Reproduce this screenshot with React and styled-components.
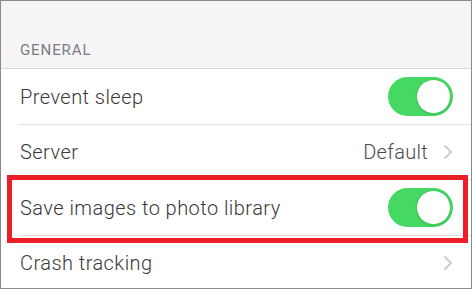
import React from 'react';
import styled, { createGlobalStyle } from 'styled-components';

const GlobalStyle = createGlobalStyle`
  html, body {
    margin:0;
    background:#ffffff;
  }
  * { box-sizing:border-box; }
`;

const Frame = styled.div`
  width:472px;
  height:289px;
  border:1px solid #8a8a8a;
  overflow:hidden;
  background:#ffffff;
  font-family:Roboto, "Liberation Sans", sans-serif;
`;

const SectionHeader = styled.div`
  height:68px;
  background:#f6f4f7;
  border-bottom:1px solid #d9d8dc;
  display:flex;
  align-items:flex-end;
  padding:0 0 9px 19px;
  font-size:15px;
  font-weight:400;
  letter-spacing:0.9px;
  color:#7c7c80;
`;

const Row = styled.div`
  position:relative;
  height:55.5px;
  display:flex;
  align-items:center;
  justify-content:space-between;
  padding:0 18px 0 19px;

  &::before {
    content:'';
    display:${p => (p.last ? 'none' : 'block')};
    position:absolute;
    left:18px;
    right:0;
    bottom:0;
    height:1px;
    background:#e0e0e2;
  }

  &::after {
    content:'';
    display:${p => (p.highlight ? 'block' : 'none')};
    position:absolute;
    z-index:2;
    top:-5px;
    bottom:-7px;
    left:6px;
    right:3px;
    border:5px solid #ea1f28;
    pointer-events:none;
  }
`;

const Label = styled.span`
  font-size:20px;
  font-weight:300;
  letter-spacing:0.45px;
  color:#383838;
`;

const Right = styled.div`
  display:flex;
  align-items:center;
  gap:15px;
`;

const Value = styled.span`
  font-size:20px;
  font-weight:300;
  letter-spacing:0.3px;
  color:#4a4a4a;
`;

const Track = styled.div`
  width:65px;
  height:39px;
  border-radius:20px;
  background:${p => (p.on ? '#45d964' : '#e5e5ea')};
  display:flex;
  align-items:center;
  justify-content:${p => (p.on ? 'flex-end' : 'flex-start')};
  padding:0 2px;
`;

const Knob = styled.div`
  width:35px;
  height:35px;
  border-radius:50%;
  background:#ffffff;
  border:1px solid #3cc95a;
  box-shadow:0 1px 2px rgba(0,0,0,0.12);
`;

function Toggle({ on }) {
  return (
    <Track on={on ? 1 : 0}>
      <Knob />
    </Track>
  );
}

function Chevron() {
  return (
    <svg width="10" height="16" viewBox="0 0 10 16">
      <polyline points="1.5,1.5 8,8 1.5,14.5" fill="none" stroke="#cbcbd0" strokeWidth="2" />
    </svg>
  );
}

export default function App() {
  return (
    <>
      <GlobalStyle />
      <Frame>
        <SectionHeader>GENERAL</SectionHeader>
        <Row>
          <Label>Prevent sleep</Label>
          <Toggle on />
        </Row>
        <Row>
          <Label>Server</Label>
          <Right>
            <Value>Default</Value>
            <Chevron />
          </Right>
        </Row>
        <Row highlight={1}>
          <Label>Save images to photo library</Label>
          <Toggle on />
        </Row>
        <Row last={1}>
          <Label>Crash tracking</Label>
          <Chevron />
        </Row>
      </Frame>
    </>
  );
}
